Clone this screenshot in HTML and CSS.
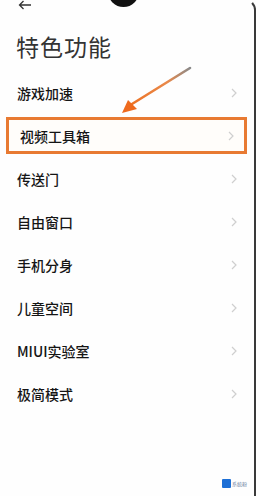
FILE: index.html
```html
<!DOCTYPE html>
<html lang="zh">
<head>
<meta charset="utf-8">
<link rel="stylesheet" href="styles.css">
</head>
<body>
<div class="screen">
  <div class="topbar">
    <svg class="back" width="14" height="10" viewBox="0 0 14 10"><path d="M13 5H1.5M5.5 1L1.5 5l4 4" fill="none" stroke="#333" stroke-width="1.3"/></svg>
  </div>
  <h1 class="title">特色功能</h1>
  <ul class="list">
    <li class="row"><span>游戏加速</span><svg class="chev" width="6" height="10" viewBox="0 0 6 10"><path d="M1 1l4 4-4 4" fill="none" stroke="#cfcfcf" stroke-width="1.2"/></svg></li>
    <li class="row hl"><span>视频工具箱</span><svg class="chev" width="6" height="10" viewBox="0 0 6 10"><path d="M1 1l4 4-4 4" fill="none" stroke="#cfcfcf" stroke-width="1.2"/></svg></li>
    <li class="row"><span>传送门</span><svg class="chev" width="6" height="10" viewBox="0 0 6 10"><path d="M1 1l4 4-4 4" fill="none" stroke="#cfcfcf" stroke-width="1.2"/></svg></li>
    <li class="row"><span>自由窗口</span><svg class="chev" width="6" height="10" viewBox="0 0 6 10"><path d="M1 1l4 4-4 4" fill="none" stroke="#cfcfcf" stroke-width="1.2"/></svg></li>
    <li class="row"><span>手机分身</span><svg class="chev" width="6" height="10" viewBox="0 0 6 10"><path d="M1 1l4 4-4 4" fill="none" stroke="#cfcfcf" stroke-width="1.2"/></svg></li>
    <li class="row"><span>儿童空间</span><svg class="chev" width="6" height="10" viewBox="0 0 6 10"><path d="M1 1l4 4-4 4" fill="none" stroke="#cfcfcf" stroke-width="1.2"/></svg></li>
    <li class="row"><span>MIUI实验室</span><svg class="chev" width="6" height="10" viewBox="0 0 6 10"><path d="M1 1l4 4-4 4" fill="none" stroke="#cfcfcf" stroke-width="1.2"/></svg></li>
    <li class="row"><span>极简模式</span><svg class="chev" width="6" height="10" viewBox="0 0 6 10"><path d="M1 1l4 4-4 4" fill="none" stroke="#cfcfcf" stroke-width="1.2"/></svg></li>
  </ul>

  <div class="camera"></div>
  <div class="bezel"></div>
  <svg class="pointer" width="256" height="130" viewBox="0 0 256 130">
    <defs>
      <linearGradient id="g" x1="190" y1="68" x2="125" y2="108" gradientUnits="userSpaceOnUse">
        <stop offset="0" stop-color="#8a8a8a"/>
        <stop offset="0.35" stop-color="#e9894a"/>
        <stop offset="1" stop-color="#ee6f1f"/>
      </linearGradient>
    </defs>
    <path d="M190 68 L132 104" stroke="url(#g)" stroke-width="2.6" stroke-linecap="round" fill="none"/>
    <path d="M122 113 L128 100 L137 109 Z" fill="#ee6a1e"/>
  </svg>
  <div class="mark"><span class="mark-logo"></span><span class="mark-text">系统粉</span></div>
</div>
</body>
</html>
```
FILE: styles.css
```css
* { box-sizing: border-box; }
html, body { margin: 0; padding: 0; background: #fff; }
body {
  width: 256px;
  height: 496px;
  overflow: hidden;
  font-family: "Noto Sans CJK SC", "Noto Sans", sans-serif;
}
.screen {
  position: relative;
  width: 256px;
  height: 496px;
  background: #fefefe;
}
.topbar {
  height: 12px;
  padding-left: 18px;
  display: flex;
  align-items: flex-start;
}
.title {
  margin: 0;
  padding: 18px 0 0 16px;
  font-size: 23px;
  line-height: 32px;
  font-weight: 400;
  color: #333;
  letter-spacing: 1px;
}
.list {
  list-style: none;
  margin: 0;
  padding: 9px 0 0 0;
}
.row {
  height: 43px;
  padding: 0 19px 0 17px;
  display: flex;
  align-items: center;
  justify-content: space-between;
  font-size: 14px;
  color: #151515;
  font-weight: 500;
}
.row.hl {
  margin: 3px 9px 3px 6px;
  padding: 0 10px 0 11px;
  height: 37px;
  border: 3px solid #e87a32;
  background: #fffdfa;
}
.chev { flex: none; }
.camera {
  position: absolute;
  left: 108px;
  top: -24px;
  width: 31px;
  height: 31px;
  border-radius: 50%;
  background: #111;
}
.bezel {
  position: absolute;
  right: 0;
  top: -1px;
  width: 11px;
  height: 498px;
  border-right: 2px solid #3a3a3a;
  border-top: 2px solid transparent;
  border-top-right-radius: 18px;
}
.pointer {
  position: absolute;
  left: 0;
  top: 0;
}
.mark {
  position: absolute;
  left: 222px;
  top: 479px;
  display: flex;
  align-items: center;
  gap: 1px;
}
.mark-logo {
  width: 9px;
  height: 9px;
  background: #1d6fd6;
  border-radius: 1px;
}
.mark-text {
  font-size: 5px;
  color: #6a7fa0;
  line-height: 5px;
}
```
